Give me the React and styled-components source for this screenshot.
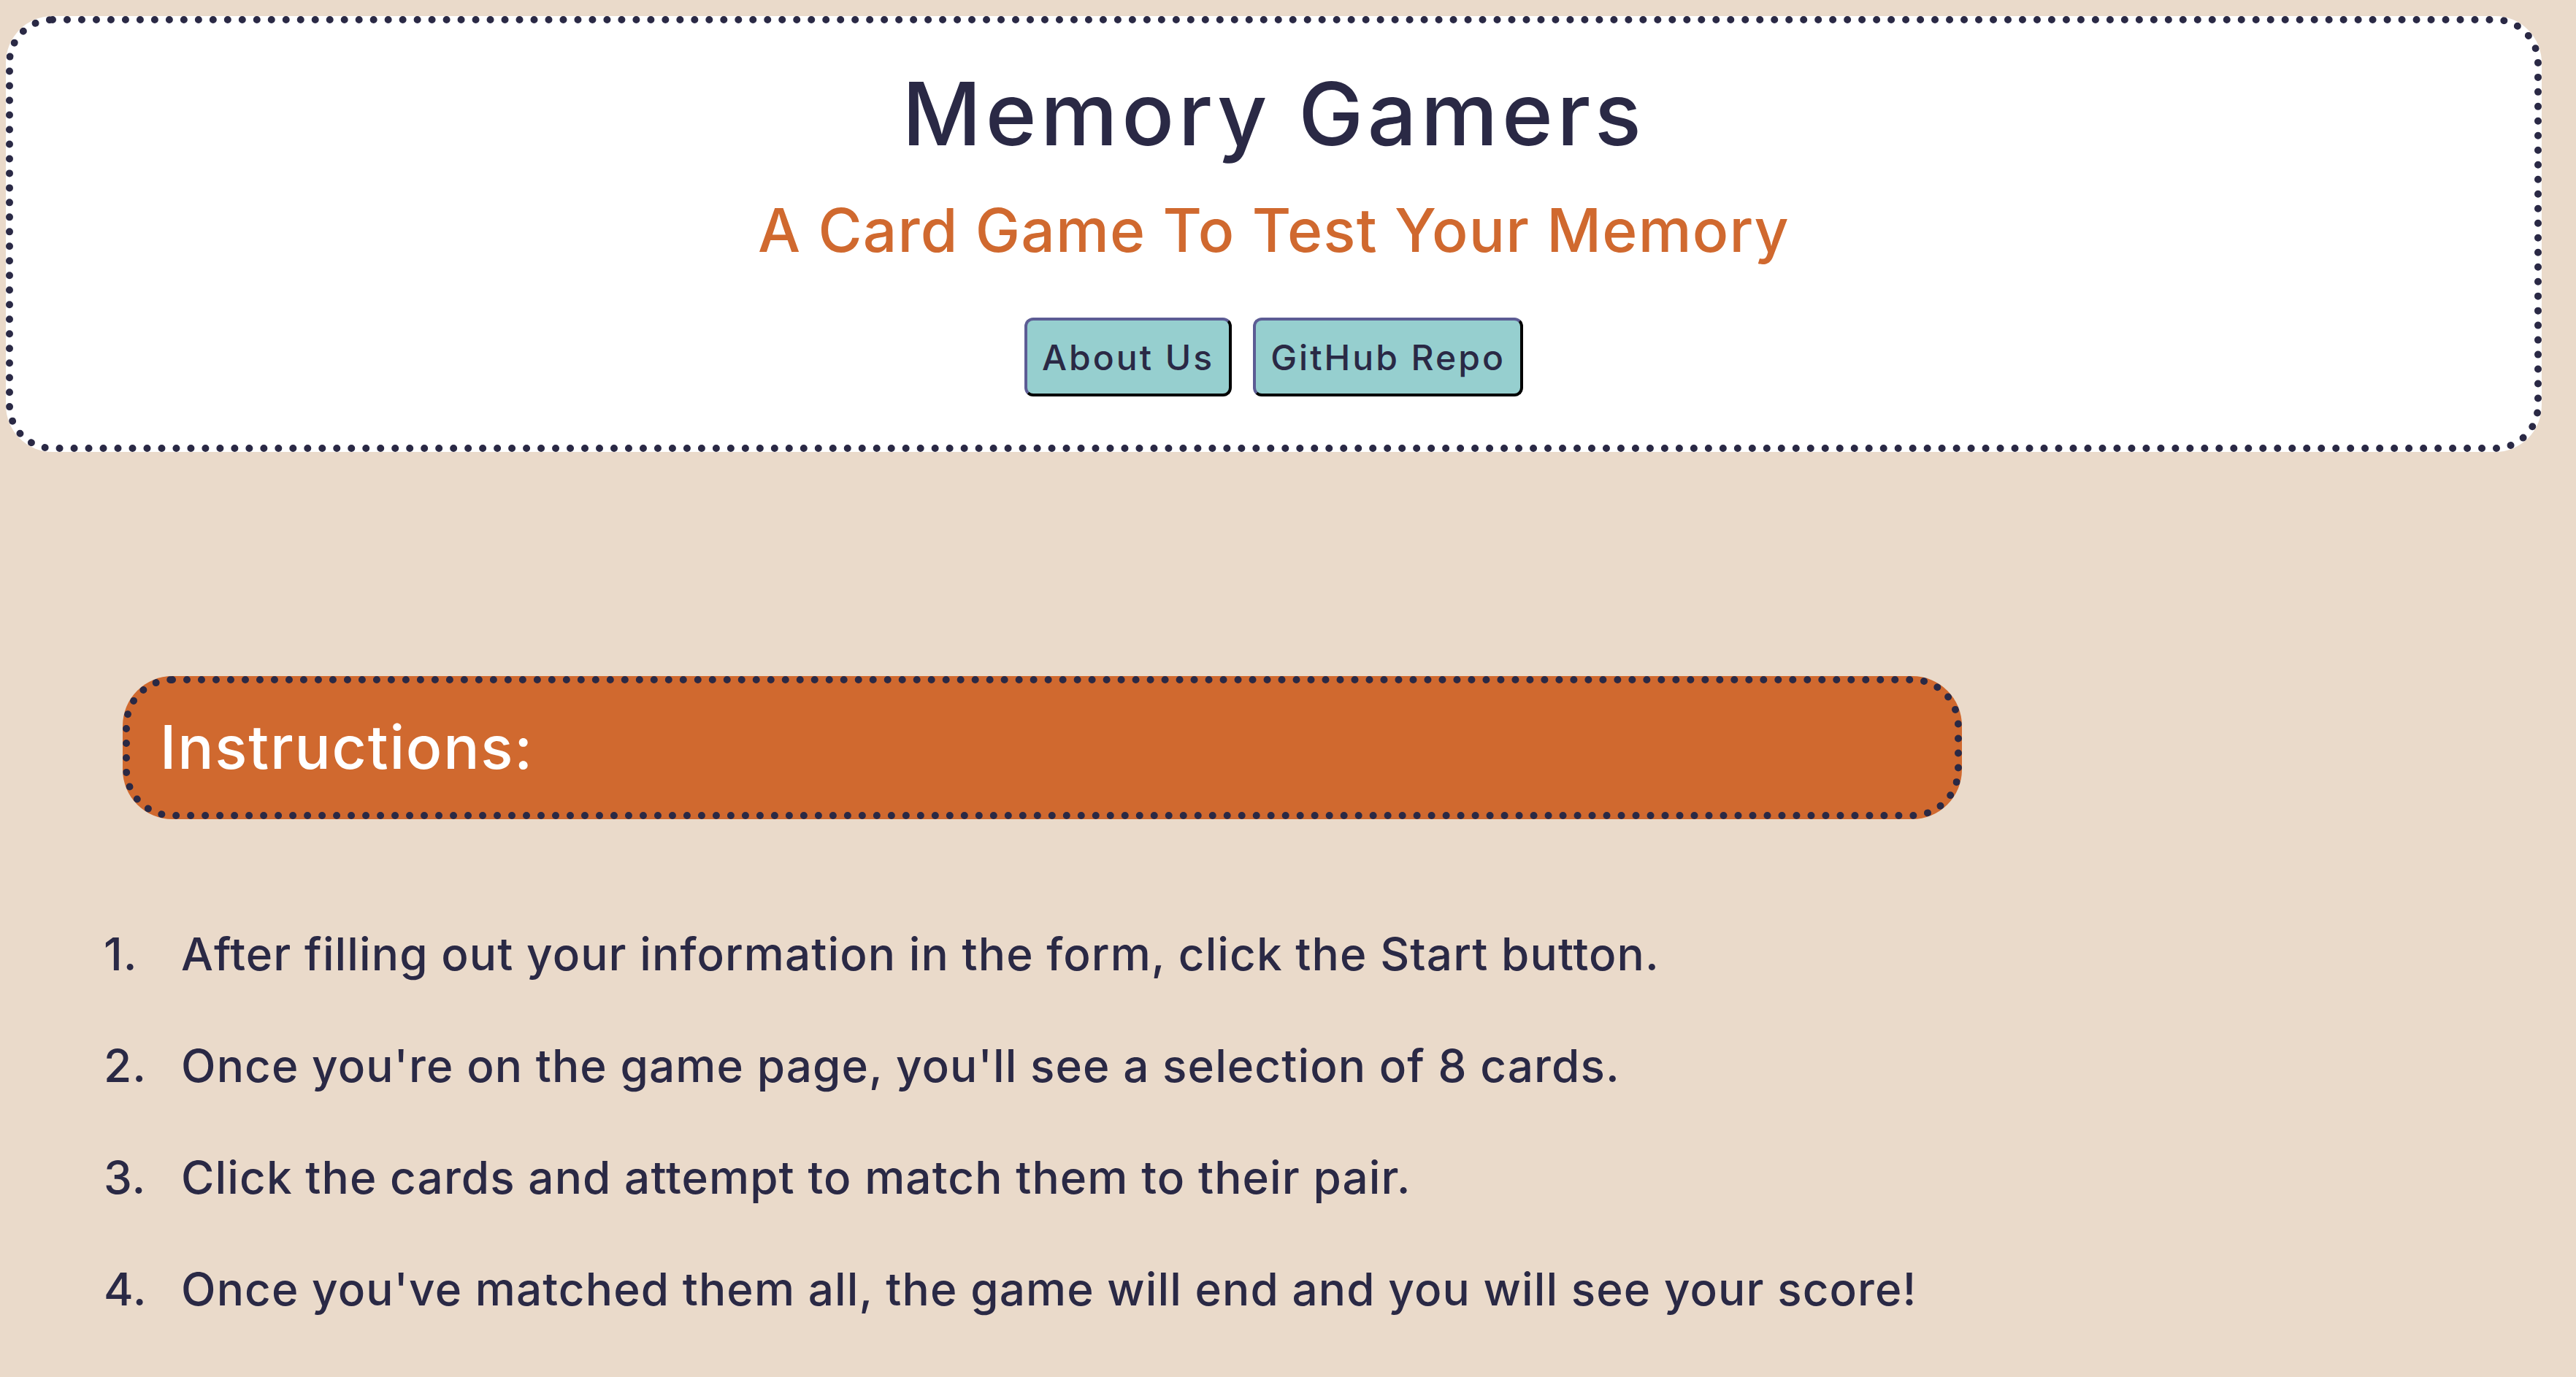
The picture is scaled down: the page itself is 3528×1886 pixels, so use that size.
import React from 'react';
import styled, { createGlobalStyle } from 'styled-components';

const Global = createGlobalStyle`
  html, body { margin: 0; padding: 0; background: #EADACA; }
  body { font-family: Inter, "Open Sans", sans-serif; color: #2A2945; }
`;

const Page = styled.div`
  display: flex;
  flex-direction: column;
  padding: 22px 47px 60px 8px;
`;

const Header = styled.header`
  background: #fff;
  border: 10px dotted #2A2945;
  border-radius: 64px;
  display: flex;
  flex-direction: column;
  align-items: center;
  padding: 65px 0 66px;
`;

const Title = styled.h1`
  margin: 0;
  font-size: 119px;
  line-height: 118px;
  font-weight: 500;
  letter-spacing: 5.5px;
  color: #2A2945;
`;

const Subtitle = styled.h2`
  margin: 59px 0 0;
  font-size: 82px;
  line-height: 83px;
  font-weight: 500;
  letter-spacing: 1.2px;
  color: #D0692F;
`;

const Nav = styled.nav`
  display: flex;
  gap: 29px;
  margin-top: 78px;
`;

const NavButton = styled.button`
  height: 108px;
  padding: 0 20px;
  border: 4px solid;
  border-color: #5C5C94 #000 #000 #5C5C94;
  border-radius: 12px;
  background: #96CFCF;
  font-family: Inter, "Open Sans", sans-serif;
  font-weight: 500;
  font-size: 48px;
  letter-spacing: 3px;
  color: #2A2945;
  cursor: pointer;
`;

const Main = styled.main`
  display: flex;
  flex-direction: column;
  margin-top: 307px;
`;

const InstructionsBar = styled.div`
  box-sizing: border-box;
  width: 2519px;
  height: 196px;
  margin-left: 160px;
  border: 10px dotted #2A2945;
  border-radius: 68px;
  background: #D0692F;
  display: flex;
  align-items: center;
  padding-left: 41px;
`;

const BarTitle = styled.h2`
  margin: 0;
  font-size: 82px;
  line-height: 80px;
  font-weight: 500;
  letter-spacing: 1.8px;
  color: #fff;
`;

const Steps = styled.ol`
  list-style: none;
  margin: 108px 0 0;
  padding: 0 0 0 134px;
`;

const Step = styled.li`
  display: flex;
  font-size: 62px;
  line-height: 153px;
  font-weight: 500;
  letter-spacing: 1.1px;
  color: #2A2945;
`;

const StepNum = styled.span`
  width: 106px;
  flex: none;
`;

const steps = [
  'After filling out your information in the form, click the Start button.',
  "Once you're on the game page, you'll see a selection of 8 cards.",
  'Click the cards and attempt to match them to their pair.',
  "Once you've matched them all, the game will end and you will see your score!",
];

export default function App() {
  return (
    <>
      <Global />
      <Page>
        <Header>
          <Title>Memory Gamers</Title>
          <Subtitle>A Card Game To Test Your Memory</Subtitle>
          <Nav>
            <NavButton>About Us</NavButton>
            <NavButton>GitHub Repo</NavButton>
          </Nav>
        </Header>
        <Main>
          <InstructionsBar>
            <BarTitle>Instructions:</BarTitle>
          </InstructionsBar>
          <Steps>
            {steps.map((s, i) => (
              <Step key={i}>
                <StepNum>{i + 1}.</StepNum>
                <span>{s}</span>
              </Step>
            ))}
          </Steps>
        </Main>
      </Page>
    </>
  );
}
